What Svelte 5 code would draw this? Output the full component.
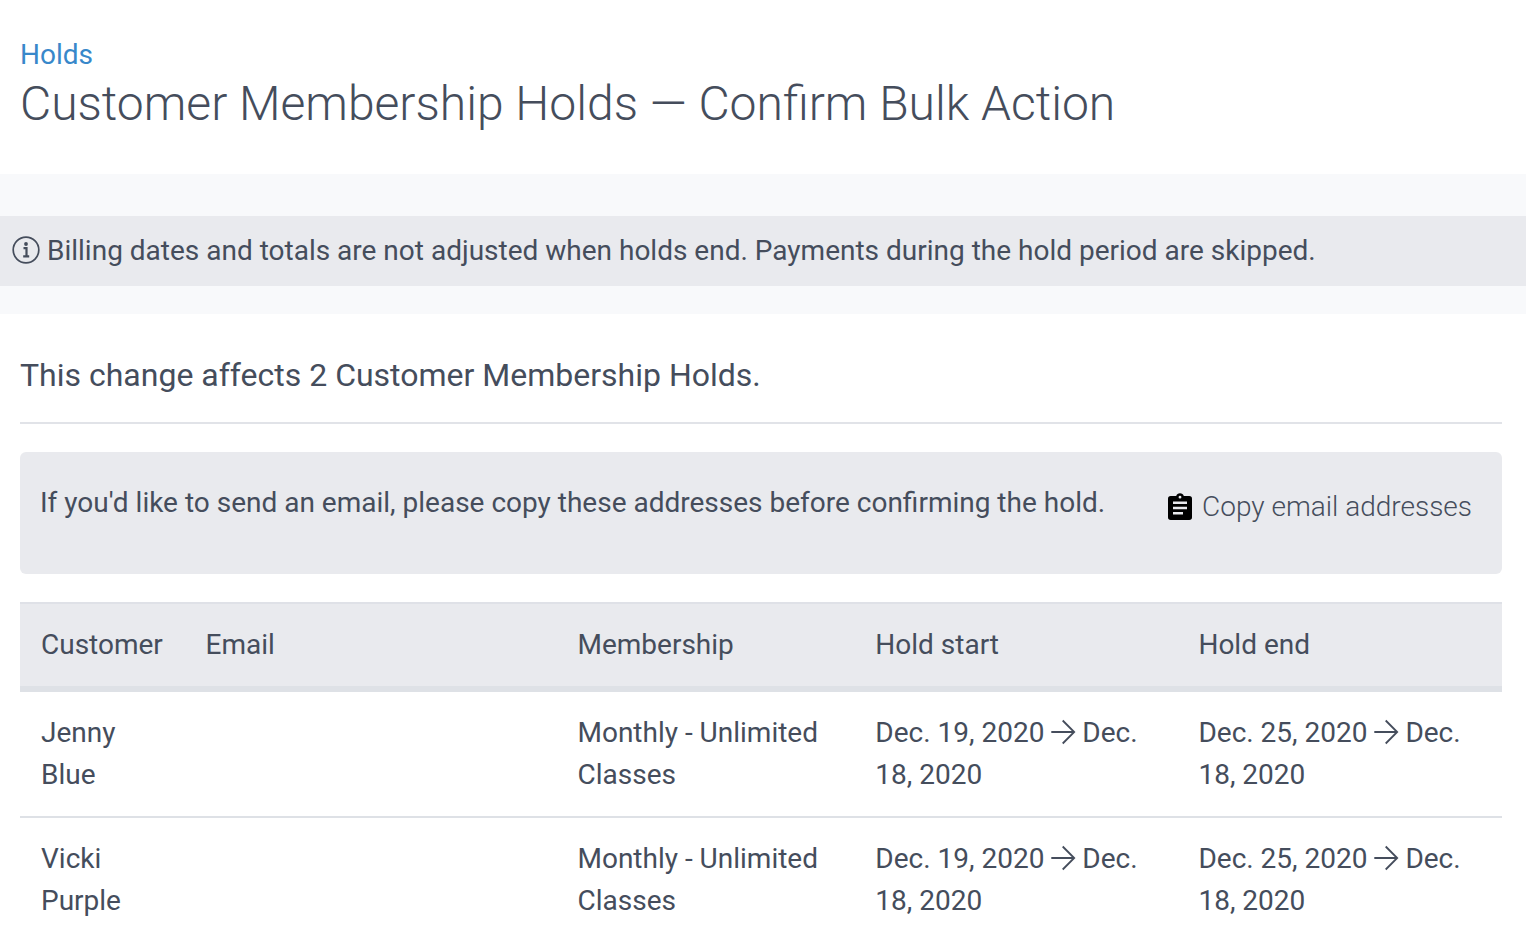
<script>
  const rows = [
    { first: 'Jenny', last: 'Blue' },
    { first: 'Vicki', last: 'Purple' }
  ];
</script>

{#snippet arrow()}
  <svg class="arrow" viewBox="0 0 24 24" aria-hidden="true"><path d="M0.3 12H23.2M11.7 0.5L23.2 12L11.7 23.5" /></svg>
{/snippet}

<header>
  <a href="#holds">Holds</a>
  <h1>Customer Membership Holds — Confirm Bulk Action</h1>
</header>
<div class="band">
  <p class="notice">
    <svg class="info" viewBox="0 0 28 28" aria-hidden="true">
      <circle cx="14" cy="13" r="12.8" />
      <path class="stem" d="M11.5 11.2H14.5V19M11.2 19.3H17.2" />
      <circle class="dot" cx="14" cy="7" r="1.9" />
    </svg>
    <span>Billing dates and totals are not adjusted when holds end. Payments during the hold period are skipped.</span>
  </p>
</div>
<main>
  <h2>This change affects 2 Customer Membership Holds.</h2>
  <section>
    <p>If you'd like to send an email, please copy these addresses before confirming the hold.</p>
    <button type="button">
      <svg class="clip" viewBox="0 0 24 28" aria-hidden="true">
        <path fill-rule="evenodd" d="M2.7 3H8.2A4 4 0 0 1 15.8 3H21.3A2.7 2.7 0 0 1 24 5.7V24.3A2.7 2.7 0 0 1 21.3 27H2.7A2.7 2.7 0 0 1 0 24.3V5.7A2.7 2.7 0 0 1 2.7 3ZM12 2.8A1.4 1.4 0 0 0 12 5.6A1.4 1.4 0 0 0 12 2.8Z" />
        <path class="lines" d="M5 9.7H19M5 15H19M5 20.3H15" />
      </svg>
      Copy email addresses
    </button>
  </section>
  <table>
    <colgroup><col class="c1" /><col class="c2" /><col class="c3" /><col class="c4" /><col class="c5" /></colgroup>
    <thead><tr><th>Customer</th><th>Email</th><th>Membership</th><th>Hold start</th><th>Hold end</th></tr></thead>
    <tbody>
      {#each rows as row}
        <tr>
          <td>{row.first}<br />{row.last}</td>
          <td></td>
          <td>Monthly - Unlimited Classes</td>
          <td>Dec. 19, 2020 {@render arrow()} Dec. 18, 2020</td>
          <td>Dec. 25, 2020 {@render arrow()} Dec. 18, 2020</td>
        </tr>
      {/each}
    </tbody>
  </table>
</main>

<style>
  :global(body) { margin: 0; background: #fff; color: #454d5c; font: 400 28px/42px Roboto, sans-serif; }
  header { padding: 34px 20px 42px; }
  a { display: block; color: #3888ca; text-decoration: none; }
  h1 { margin: 0; font-size: 48px; line-height: 56px; font-weight: 300; }
  .band { padding: 42px 0 28px; background: #f8f9fb; }
  .notice { display: flex; align-items: center; gap: 7px; margin: 0; padding: 14px 12px; background: #e9eaee; }
  svg { flex: none; overflow: visible; fill: none; stroke: currentColor; stroke-width: 2; }
  .info { width: 28px; height: 28px; }
  .info circle { stroke-width: 1.7; }
  .info .dot { fill: currentColor; stroke: none; }
  main { padding: 40px 24px 0 20px; }
  h2 { margin: 0; padding-bottom: 26px; border-bottom: 2px solid #e1e3e8; font-size: 32px; line-height: 42px; font-weight: 400; }
  section { display: flex; justify-content: space-between; align-items: flex-start; margin: 28px 0; padding: 30px 30px 46px 20px; border-radius: 6px; background: #e9eaee; }
  section p { margin: 0; }
  button { display: flex; align-items: center; gap: 10px; margin: 4px 0 0; padding: 0; border: 0; background: none; color: inherit; font: 300 28px/42px Roboto, sans-serif; }
  .clip { width: 24px; height: 28px; }
  .clip path { fill: #000; stroke: none; }
  .clip .lines { stroke: #e9eaee; stroke-width: 2.6; }
  .info .stem { stroke-width: 2.2; }
  table { width: 100%; border-collapse: separate; border-spacing: 0; table-layout: fixed; }
  .c1 { width: 11.1%; }
  .c2 { width: 25.1%; }
  .c3 { width: 20.1%; }
  .c4 { width: 21.8%; }
  .c5 { width: 21.9%; }
  th, td { box-sizing: border-box; padding: 20px 21px; text-align: left; vertical-align: top; font-weight: 400; }
  th { background: #e9eaee; border-top: 2px solid #dfe1e7; border-bottom: 6px solid #dee1e6; }
  td { border-bottom: 2px solid #dee1e6; }
  tr:last-child td { border-bottom: 0; }
  .arrow { width: 24px; height: 24px; vertical-align: -2px; stroke-width: 1.8; }
</style>
